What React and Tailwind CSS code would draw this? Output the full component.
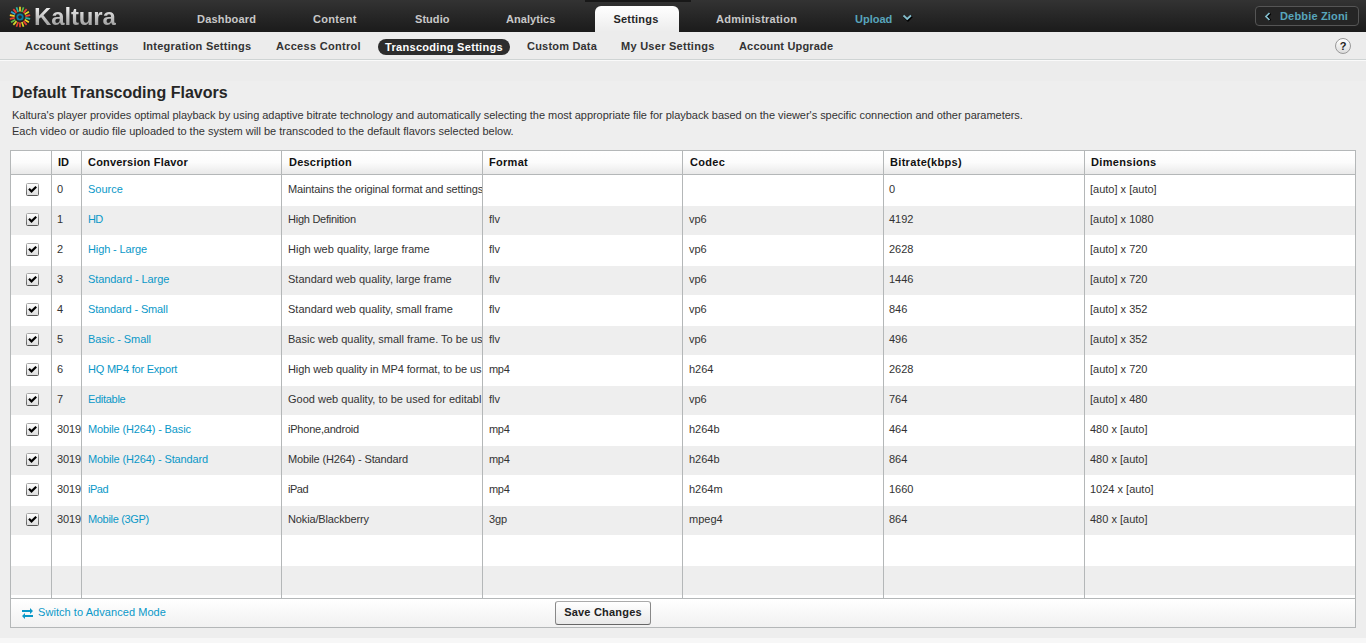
import React from "react";

const SUB_LEFT = [
  ["Account Settings", "w-[118px]"],
  ["Integration Settings", "w-[133px] tracking-[0.25px]"],
  ["Access Control", "w-[102px] tracking-[0.3px]"],
];
const SUB_RIGHT = [
  ["Custom Data", "w-[94px]"],
  ["My User Settings", "w-[118px] tracking-[0.27px]"],
  ["Account Upgrade", "w-[120px] tracking-[0.17px]"],
];

const ROWS = [
  ["0", "Source", "Maintains the original format and settings", "", "", "0", "[auto] x [auto]"],
  ["1", "HD", "High Definition", "flv", "vp6", "4192", "[auto] x 1080"],
  ["2", "High - Large", "High web quality, large frame", "flv", "vp6", "2628", "[auto] x 720"],
  ["3", "Standard - Large", "Standard web quality, large frame", "flv", "vp6", "1446", "[auto] x 720"],
  ["4", "Standard - Small", "Standard web quality, small frame", "flv", "vp6", "846", "[auto] x 352"],
  ["5", "Basic - Small", "Basic web quality, small frame. To be us", "flv", "vp6", "496", "[auto] x 352"],
  ["6", "HQ MP4 for Export", "High web quality in MP4 format, to be us", "mp4", "h264", "2628", "[auto] x 720"],
  ["7", "Editable", "Good web quality, to be used for editabl", "flv", "vp6", "764", "[auto] x 480"],
  ["3019", "Mobile (H264) - Basic", "iPhone,android", "mp4", "h264b", "464", "480 x [auto]"],
  ["3019", "Mobile (H264) - Standard", "Mobile (H264) - Standard", "mp4", "h264b", "864", "480 x [auto]"],
  ["3019", "iPad", "iPad", "mp4", "h264m", "1660", "1024 x [auto]"],
  ["3019", "Mobile (3GP)", "Nokia/Blackberry", "3gp", "mpeg4", "864", "480 x [auto]"],
  null,
  null,
];

// Letter spacing for the flavor names and descriptions that run tighter or wider than the default.
const TIGHT = {
  "Standard - Large": "tracking-[-0.08px]",
  "Standard - Small": "tracking-[-0.14px]",
  "High - Large": "tracking-[-0.12px]",
  "Basic - Small": "tracking-[-0.1px]",
  "HQ MP4 for Export": "tracking-[-0.22px]",
  Editable: "tracking-[-0.3px]",
  "Mobile (H264) - Basic": "tracking-[-0.14px]",
  "Mobile (H264) - Standard": "tracking-[-0.15px]",
  "Mobile (3GP)": "tracking-[-0.33px]",
  HD: "tracking-[-0.6px]",
  iPad: "tracking-[-0.5px]",
  "High Definition": "tracking-[-0.25px]",
  "Maintains the original format and settings": "tracking-[-0.13px]",
  "High web quality in MP4 format, to be us": "tracking-[-0.1px]",
  "Good web quality, to be used for editabl": "tracking-[0.01px]",
  "iPhone,android": "tracking-[-0.22px]",
  "Nokia/Blackberry": "tracking-[-0.14px]",
  mp4: "tracking-[-0.3px]",
  "3gp": "tracking-[-0.1px]",
};

const HEADS = [
  ["ID", "pl-[6px]"],
  ["Conversion Flavor", "pl-[6px] tracking-[0.2px]"],
  ["Description", "pl-[7px] tracking-[0.22px]"],
  ["Format", "pl-[6px] tracking-[0.3px]"],
  ["Codec", "pl-[7px] tracking-[0.3px]"],
  ["Bitrate(kbps)", "pl-[6px] tracking-[0.32px]"],
  ["Dimensions", "pl-[6px] tracking-[0.32px]"],
];
const GRID = "grid grid-cols-[41px_30px_200px_201px_200px_201px_201px_270px]";
const RAYS = ["#f5d327", "#5cb947", "#e8402f", "#e3de2a", "#f0482f", "#2fb5a0", "#f5d327", "#e8402f", "#d9d62a", "#f0482f", "#e8402f", "#d9d62a", "#5cb947", "#e8402f", "#f5d327", "#2a9fd0", "#e8402f", "#2fb5a0"];

function Logo() {
  return (
    <svg className="h-[22px] w-[22px] shrink-0" viewBox="-11 -11 22 22">
      {RAYS.map((c, i) => (
        <line key={i} x1="0" y1="-5.4" x2="0" y2="-10.3" stroke={c} strokeWidth="1.7" transform={`rotate(${i * 20})`} />
      ))}
      <circle r="2.7" fill="none" stroke="#087aa0" strokeWidth="1.8" />
    </svg>
  );
}

function Check() {
  return (
    <svg className="h-[13px] w-[13px]" viewBox="0 0 13 13">
      <defs>
        <linearGradient id="box" x1="0" y1="0" x2="0" y2="1">
          <stop offset="0" stopColor="#fff" />
          <stop offset="1" stopColor="#dcdcdc" />
        </linearGradient>
        <linearGradient id="edge" x1="0" y1="0" x2="0" y2="1">
          <stop offset="0" stopColor="#aaa" />
          <stop offset="1" stopColor="#555" />
        </linearGradient>
      </defs>
      <rect x=".5" y=".5" width="12" height="12" rx="1" fill="url(#box)" stroke="url(#edge)" />
      <path d="M3 5.8 5.5 8.4 10.2 3.7" fill="none" stroke="#000" strokeWidth="2.2" />
    </svg>
  );
}

function HeadCell({ children, last }) {
  return (
    <div className={`flex h-full items-center pb-px whitespace-nowrap ${last ? "" : "border-r border-[#b4b7b8]"}`}>{children}</div>
  );
}

export default function App() {
  return (
    <div className="flex h-[643px] w-[1366px] flex-col overflow-hidden bg-[#eee] font-['Liberation_Sans',Arial,sans-serif] text-[11px] leading-[16px] text-[#333]">
      <header className="flex h-8 shrink-0 bg-linear-to-b from-[#333] to-[#1b1b1b] font-bold text-[#c8c8c8]">
        <div className="flex w-[197px] items-center gap-[3px] pt-px pl-[9px]">
          <Logo />
          <span className="bg-linear-to-b from-[#f0f0f0] from-20% to-[#8c8c8c] to-90% bg-clip-text text-[24px] leading-8 tracking-[-0.15px] text-transparent">Kaltura</span>
        </div>
        <nav className="flex pt-[11px] tracking-[0.2px]">
          <span className="w-[116px]">Dashboard</span>
          <span className="w-[102px] tracking-[0.3px]">Content</span>
          <span className="w-[91px] tracking-[0.05px]">Studio</span>
          <span className="w-[79px] tracking-[0.05px]">Analytics</span>
        </nav>
        <div className="flex h-8 w-[106px] justify-center border-t-2 border-[#181818] pr-[2px] pt-1">
          <span className="h-[26px] w-[84px] rounded-t-md bg-linear-to-b from-white to-[#ececec] pt-[5px] pr-[2px] text-center tracking-[0.2px] text-[#262626]">Settings</span>
        </div>
        <div className="flex flex-1 pt-[11px] tracking-[0.25px]">
          <span className="ml-[25px] w-[139px]">Administration</span>
          <span className="tracking-[0px] text-[#58a5bc]">Upload</span>
          <svg className="mt-[3px] ml-[10px] h-[8px] w-[11px]" viewBox="0 0 11 8">
            <path d="M2 2.5 6 6.5 10 2.5" fill="none" stroke="#000" strokeWidth="2" />
            <path d="M1.5 1.5 5.2 5 9 1.5" fill="none" stroke="#83bdcc" strokeWidth="1.8" />
          </svg>
        </div>
        <div className="mt-[6px] mr-[7px] flex h-5 w-[104px] items-center rounded border border-[#555] bg-[#252525] text-[#58a5bc]">
          <svg className="ml-[8px] h-[9px] w-[8px]" viewBox="0 0 8 9">
            <path d="M6.5 1.5 3.5 5 6.5 8.5" fill="none" stroke="#000" strokeWidth="2" />
            <path d="M5.5 1 2 4.5 5.5 8" fill="none" stroke="#83bdcc" strokeWidth="1.7" />
          </svg>
          <span className="ml-[8px] whitespace-nowrap tracking-[0.17px]">Debbie Zioni</span>
        </div>
      </header>

      <div className="flex h-[28px] shrink-0 border-b border-[#cfd4d4] bg-[#ececec] pl-[25px] font-bold tracking-[0.2px] whitespace-nowrap text-[#333]">
        {SUB_LEFT.map(([s, w]) => (
          <span key={s} className={`${w} pt-[6px]`}>{s}</span>
        ))}
        <span className="mt-[7px] mr-[17px] flex h-4 w-[132px] items-center justify-center rounded-full bg-[#2d2d2d] tracking-[0.3px] text-white">Transcoding Settings</span>
        {SUB_RIGHT.map(([s, w]) => (
          <span key={s} className={`${w} pt-[6px]`}>{s}</span>
        ))}
        <span className="mt-[6px] mr-[15px] ml-auto flex h-4 w-4 items-center justify-center rounded-full border border-[#999] bg-linear-to-b from-white to-[#ddd] text-[11px] tracking-normal text-[#222]">?</span>
      </div>
      <div className="h-px shrink-0 bg-[#fafafa]" />
      <div className="h-5 shrink-0 bg-[#ececec]" />

      <main className="flex flex-col px-[10px]">
        <h1 className="ml-[2px] h-[26px] pt-px text-[16px] leading-[22px] font-bold tracking-[0.02px] text-[#262626]">Default Transcoding Flavors</h1>
        <div className="ml-[2px] h-[43px] whitespace-nowrap">
          <p className="tracking-[-0.037px]">Kaltura's player provides optimal playback by using adaptive bitrate technology and automatically selecting the most appropriate file for playback based on the viewer's specific connection and other parameters.</p>
          <p className="tracking-[-0.01px]">Each video or audio file uploaded to the system will be transcoded to the default flavors selected below.</p>
        </div>

        <section className="flex h-[478px] w-[1346px] flex-col border border-[#b4b7b8] bg-white">
          <div className={`${GRID} h-6 shrink-0 border-b border-[#b4b7b8] bg-linear-to-b from-white via-[#fcfcfc] to-[#e9e9e9] font-bold text-[#111]`}>
            <HeadCell />
            {HEADS.map(([h, cls], i) => (
              <HeadCell key={h} last={i === 6}>
                <span className={cls}>{h}</span>
              </HeadCell>
            ))}
          </div>
          {ROWS.map((r, i) => (
            <div key={i} className={`${GRID} ${i % 2 ? "h-[29px] bg-[#eee]" : "h-[31px]"} shrink-0 leading-[14px]`}>
              <div className={`border-r border-[#b4b7b8] pl-[15px] ${i % 2 ? "pt-[7px]" : "pt-[8px]"}`}>{r && <Check />}</div>
              {(r || Array(7).fill("")).map((c, j) => (
                <div
                  key={j}
                  className={`overflow-hidden whitespace-nowrap ${j < 6 ? "border-r border-[#b4b7b8]" : ""} ${i % 2 ? "pt-[6px]" : "pt-[7px]"} ${j === 0 || j > 4 ? "pl-[5px]" : "pl-[6px]"} ${j === 0 ? "tracking-[-0.1px]" : ""} ${j === 1 ? "text-[#0a98c8]" : "text-[#333]"} ${TIGHT[c] || ""}`}
                >
                  {c}
                </div>
              ))}
            </div>
          ))}
          <div className={`${GRID} h-[3px] shrink-0`}>
            {[0, 1, 2, 3, 4, 5, 6].map((n) => (
              <div key={n} className="border-r border-[#b4b7b8]" />
            ))}
          </div>
          <footer className="flex flex-1 border-t border-[#b4b7b8] bg-linear-to-b from-white to-[#f1f1f1]">
            <svg className="mt-[9px] ml-[11px] h-[11px] w-[11px]" viewBox="0 0 11 11">
              <path d="M0 2h8V0l3 3-3 3V4H0zM11 7H3V5L0 8l3 3V9h8z" fill="#0a98c8" />
            </svg>
            <a className="mt-[5px] ml-[5px] w-[517px] tracking-[0.06px] text-[#0a98c8]">Switch to Advanced Mode</a>
            <button className="mt-[2px] flex h-6 w-24 items-center justify-center rounded-[3px] border border-t-[#aaa] border-r-[#888] border-b-[#666] border-l-[#888] bg-linear-to-b from-white to-[#e9e9e9] pb-[2px] font-bold tracking-[0.2px] text-[#222]">
              Save Changes
            </button>
          </footer>
        </section>
      </main>
      <div className="mt-[10px] h-[5px] shrink-0 bg-[#f7f7f7]" />
    </div>
  );
}
